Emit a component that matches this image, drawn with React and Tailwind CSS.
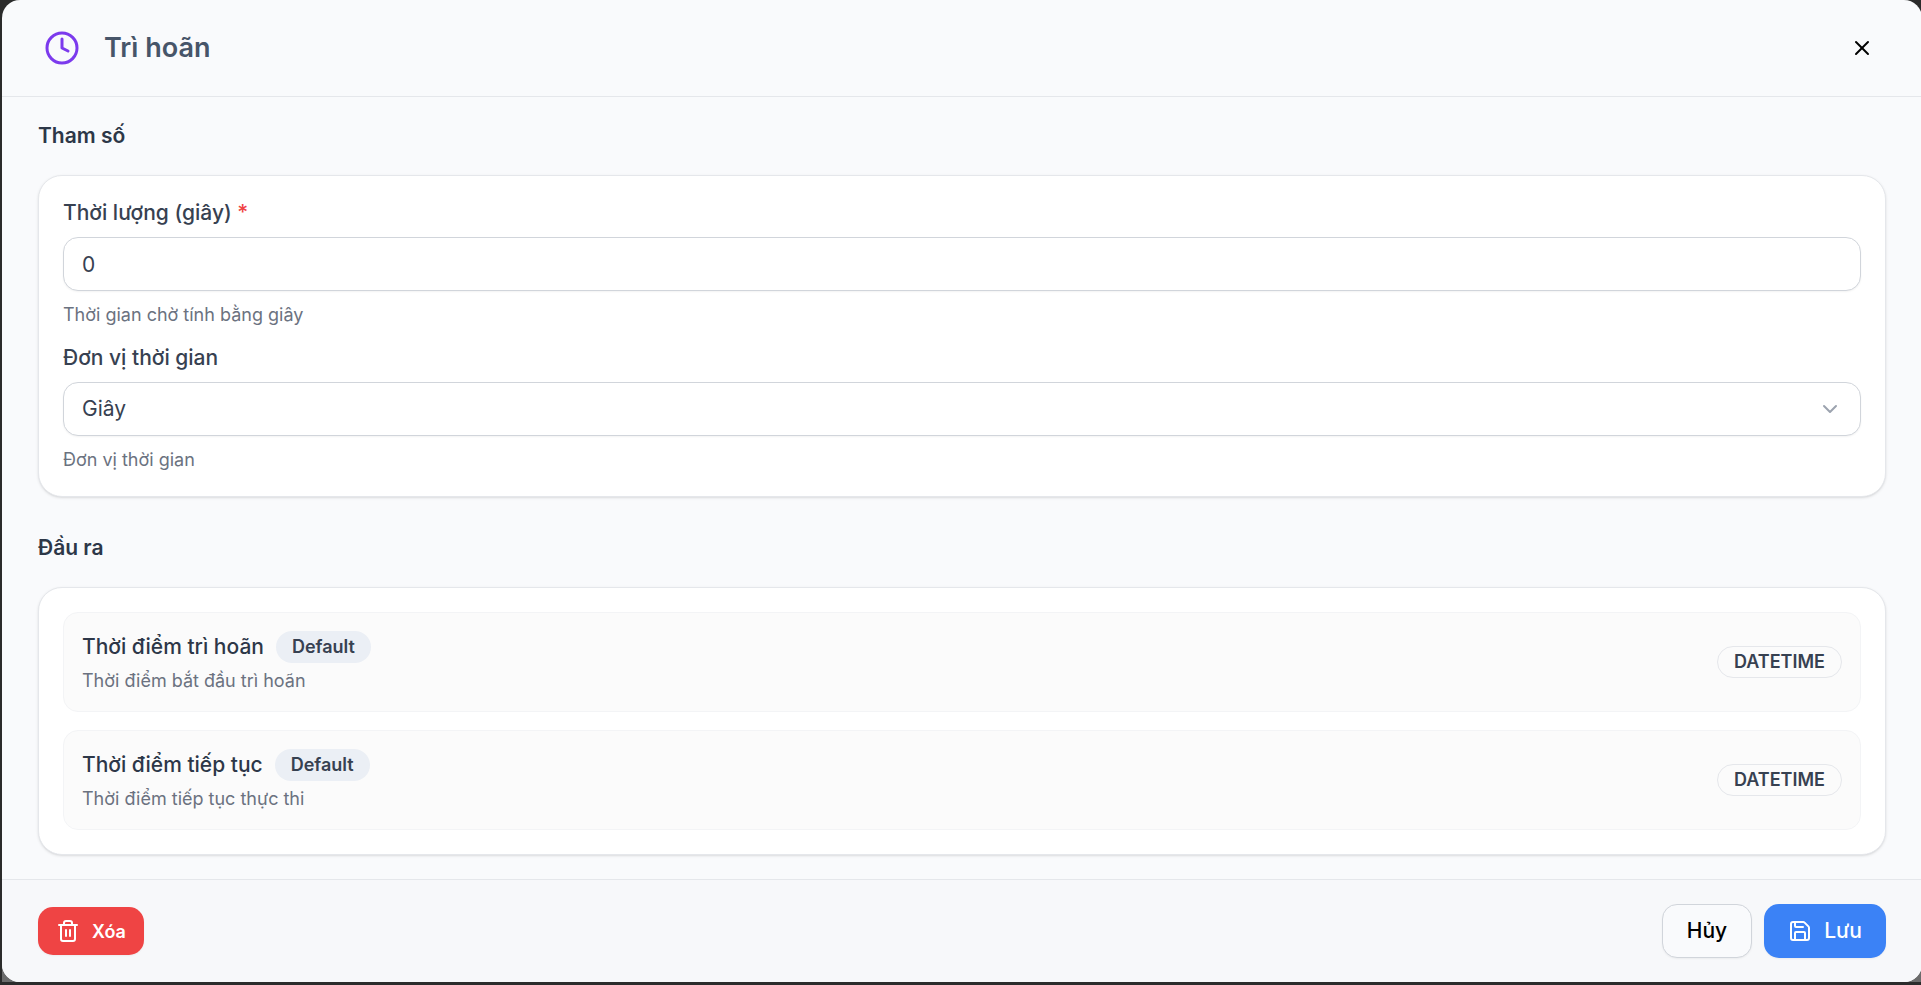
import React, { useState } from "react";
import { Clock, X, ChevronDown, Trash2, Save } from "lucide-react";

const OUTPUTS = [
  {
    name: "Thời điểm trì hoãn",
    description: "Thời điểm bắt đầu trì hoãn",
    type: "DATETIME",
  },
  {
    name: "Thời điểm tiếp tục",
    description: "Thời điểm tiếp tục thực thi",
    type: "DATETIME",
  },
];

const Section = ({ title, children }) => (
  <section>
    <h3 className="mb-6 text-[21px] leading-[30px] font-semibold text-[#2d3748]">{title}</h3>
    <div className="flex flex-col gap-[18px] rounded-3xl border border-[#e5e7eb] bg-white p-6 shadow">
      {children}
    </div>
  </section>
);

const Field = ({ id, label, required, help, children }) => (
  <div className="flex flex-col gap-3">
    <label htmlFor={id} className="text-[21px] leading-[25px] font-medium text-[#374151]">
      {label}
      {required && <span className="text-[#ef4444]"> *</span>}
    </label>
    {children}
    <p className="text-[18px] leading-6 text-[#6b7280]">{help}</p>
  </div>
);

const App = () => {
  const [duration, setDuration] = useState("0");
  const [unit, setUnit] = useState("seconds");

  return (
    <div className="min-h-screen overflow-hidden bg-[#2b2b2b] pb-[3px] pl-[2px] font-['Inter',sans-serif]">
      <div className="-mr-px bg-linear-to-b from-[#2b2b2b] from-50% to-[#6b6b6b] to-50%">
        <div
          role="dialog"
          aria-labelledby="dialog-title"
          className="overflow-hidden rounded-[18px] bg-[#f9fafc]"
        >
          {/* Header */}
          <header className="flex items-center justify-between border-b border-[#e5e7eb] px-[42px] py-6">
            <div className="flex h-12 items-center gap-6">
              <Clock className="size-9 text-[#7c3aed]" />
              <h2 id="dialog-title" className="text-[27px] leading-9 font-semibold text-[#475569]">
                Trì hoãn
              </h2>
            </div>
            <button type="button" aria-label="Đóng" className="p-1.5 text-black">
              <X className="size-6" />
            </button>
          </header>

          {/* Body */}
          <main className="flex flex-col gap-9 px-9 py-6">
            <Section title="Tham số">
              <Field id="duration" label="Thời lượng (giây)" required help="Thời gian chờ tính bằng giây">
                <input
                  id="duration"
                  type="text"
                  inputMode="numeric"
                  value={duration}
                  onChange={(e) => setDuration(e.target.value)}
                  className="h-[54px] w-full rounded-[15px] border border-[#d1d5db] bg-white px-[18px] text-[21px] text-[#374151] shadow-xs"
                />
              </Field>
              <Field id="unit" label="Đơn vị thời gian" help="Đơn vị thời gian">
                <div className="relative">
                  <select
                    id="unit"
                    value={unit}
                    onChange={(e) => setUnit(e.target.value)}
                    className="block h-[54px] w-full appearance-none rounded-[15px] border border-[#d1d5db] bg-white px-[18px] text-[21px] text-[#374151] shadow-xs"
                  >
                    <option value="seconds">Giây</option>
                    <option value="minutes">Phút</option>
                    <option value="hours">Giờ</option>
                  </select>
                  <ChevronDown className="pointer-events-none absolute inset-y-0 right-[19px] my-auto size-6 text-[#9ca3af]" />
                </div>
              </Field>
            </Section>

            <Section title="Đầu ra">
              {OUTPUTS.map((output) => (
                <div
                  key={output.name}
                  className="flex items-center justify-between rounded-[15px] border border-[#f3f4f6] bg-[#fbfbfb] p-[18px]"
                >
                  <div>
                    <div className="mb-1.5 flex items-center gap-3">
                      <span className="text-[21px] leading-8 font-medium text-[#2d3748]">{output.name}</span>
                      <span className="rounded-full bg-[#ebeff5] px-4 text-[18px] leading-8 font-semibold text-[#374151]">
                        Default
                      </span>
                    </div>
                    <p className="text-[18px] leading-6 text-[#6b7280]">{output.description}</p>
                  </div>
                  <span className="rounded-full border border-[#e5e7eb] px-4 text-[18px] leading-[30px] font-semibold text-[#374151]">
                    {output.type}
                  </span>
                </div>
              ))}
            </Section>
          </main>

          {/* Footer */}
          <footer className="flex items-center justify-between border-t border-[#e5e7eb] bg-[#f7f8fa] px-9 py-6">
            <button
              type="button"
              className="flex h-12 items-center gap-3 rounded-[15px] bg-[#ef4444] px-[18px] text-[18px] font-semibold text-white shadow-xs"
            >
              <Trash2 className="size-6" />
              Xóa
            </button>
            <div className="flex gap-3">
              <button
                type="button"
                className="h-[54px] rounded-[15px] border border-[#d1d5db] bg-[#f9fafc] px-6 text-[21px] font-medium text-black shadow-xs"
              >
                Hủy
              </button>
              <button
                type="button"
                className="flex h-[54px] items-center gap-3 rounded-[15px] bg-[#3b82f6] px-6 text-[21px] font-medium text-white shadow-xs"
              >
                <Save className="size-6" />
                Lưu
              </button>
            </div>
          </footer>
        </div>
      </div>
    </div>
  );
};

export default App;
